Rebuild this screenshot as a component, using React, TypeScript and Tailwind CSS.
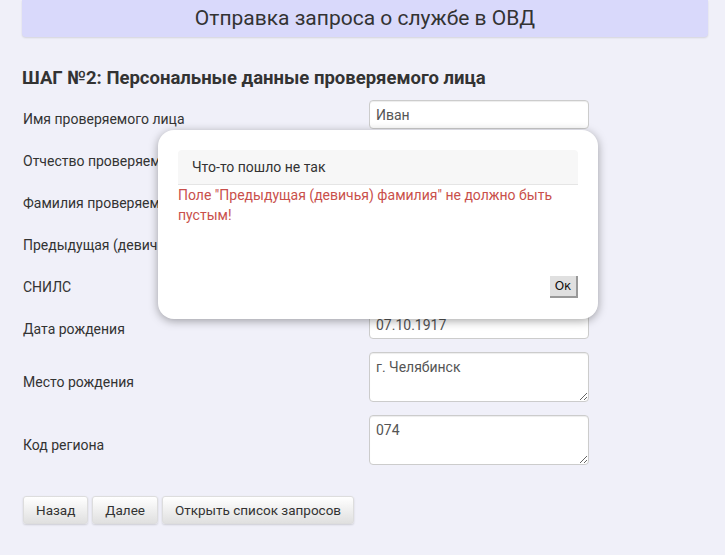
import React from 'react';

const FONT = { fontFamily: 'Roboto, "Noto Sans", sans-serif' };

interface Field {
  label: string;
  value: string;
  multiline?: boolean;
}

const FIELDS: Field[] = [
  { label: 'Имя проверяемого лица', value: 'Иван' },
  { label: 'Отчество проверяемого лица', value: '' },
  { label: 'Фамилия проверяемого лица', value: '' },
  { label: 'Предыдущая (девичья) фамилия', value: '' },
  { label: 'СНИЛС', value: '' },
  { label: 'Дата рождения', value: '07.10.1917' },
  { label: 'Место рождения', value: 'г. Челябинск', multiline: true },
  { label: 'Код региона', value: '074', multiline: true },
];

function FormRow({ field }: { field: Field }) {
  return (
    <div className="flex items-center">
      <label className="w-[346px] pt-[10px] leading-[19px] text-[14px] text-[#333]">{field.label}</label>
      {field.multiline ? (
        <textarea
          defaultValue={field.value}
          className="w-[220px] h-[50px] px-[6px] py-[4px] text-[14px] leading-[20px] text-[#555] bg-white border border-[#ccc] rounded-[4px] shadow-[inset_0_1px_1px_rgba(0,0,0,0.075)] outline-none"
          style={FONT}
        />
      ) : (
        <input
          defaultValue={field.value}
          className="w-[220px] h-[29px] px-[6px] text-[14px] text-[#555] bg-white border border-[#ccc] rounded-[4px] shadow-[inset_0_1px_1px_rgba(0,0,0,0.075)] outline-none"
          style={FONT}
        />
      )}
    </div>
  );
}

function Btn({ children }: { children: React.ReactNode }) {
  return (
    <button className="h-[28px] px-[12px] text-[13.5px] text-[#333] rounded-[3px] border border-[#ddd] bg-gradient-to-b from-white to-[#e0e0e0] shadow-[0_1px_2px_rgba(0,0,0,0.15)]">
      {children}
    </button>
  );
}

export default function App() {
  return (
    <div className="relative w-[725px] h-[555px] bg-[#f0f0f9] overflow-hidden" style={FONT}>
      {/* Header */}
      <div className="ml-[22px] mr-[17px] h-[37px] flex items-center justify-center bg-[#d9d9fb] rounded-b-[4px] shadow-[0_1px_2px_rgba(0,0,0,0.12)]">
        <h1 className="text-[21px] text-[#333]">Отправка запроса о службе в ОВД</h1>
      </div>

      <div className="px-[23px]">
        <h2 className="mt-[30px] text-[18.5px] leading-[22px] font-bold text-[#333] -ml-[1px]">
          ШАГ №2: Персональные данные проверяемого лица
        </h2>

        <div className="mt-[11px] flex flex-col gap-[13px]">
          {FIELDS.map((f) => (
            <FormRow key={f.label} field={f} />
          ))}
        </div>

        <div className="mt-[31px] flex gap-[4px]">
          <Btn>Назад</Btn>
          <Btn>Далее</Btn>
          <Btn>Открыть список запросов</Btn>
        </div>
      </div>

      {/* Modal */}
      <div className="absolute left-[158px] top-[130px] w-[440px] h-[189px] bg-white rounded-[16px] shadow-[0_2px_10px_rgba(0,0,0,0.35)] px-[20px] pt-[20px] flex flex-col">
        <div className="h-[35px] flex items-center px-[14px] bg-[#f7f7f7] rounded-t-[4px] border-b border-[#e5e5e5] text-[14px] text-[#333]">
          Что-то пошло не так
        </div>
        <p className="text-[14px] leading-[20px] text-[#c9504b]">
          Поле "Предыдущая (девичья) фамилия" не должно быть пустым!
        </p>
        <div className="mt-auto mb-[21px] flex justify-end">
          <button
            className="w-[28px] h-[22px] text-[12px] text-[#111] bg-[#e0e0e0] border-r-2 border-b-2 border-[#999] flex items-center justify-center"
            style={{ fontFamily: '"DejaVu Sans", sans-serif' }}
          >
            Ок
          </button>
        </div>
      </div>
    </div>
  );
}
